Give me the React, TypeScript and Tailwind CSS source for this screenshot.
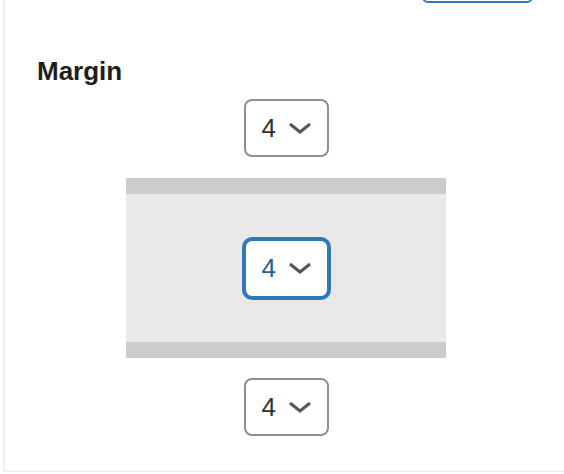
const Chevron = () => (
  <svg width="24" height="12" viewBox="0 0 24 12" className="shrink-0">
    <polyline
      points="2,2 12,10 22,2"
      fill="none"
      stroke="#50575e"
      strokeWidth="3"
      strokeLinejoin="miter"
    />
  </svg>
)

interface ISpacingSelect {
  value: string
  focused?: boolean
}

const SpacingSelect = ({ value, focused }: ISpacingSelect) => (
  <div
    className={
      focused
        ? 'w-[85px] h-[59px] rounded-[8px] border-2 border-[#3079b9] shadow-[0_0_0_2px_#3079b9] bg-white flex items-center pl-[16px] gap-[12px]'
        : 'w-[85px] h-[58px] rounded-[8px] border-2 border-[#8c8f94] bg-white flex items-center pl-[16px] gap-[12px]'
    }
  >
    <span
      className={
        focused
          ? 'text-[26px] leading-none text-[#1f6394]'
          : 'text-[26px] leading-none text-[#2c3338]'
      }
    >
      {value}
    </span>
    <Chevron />
  </div>
)

const App = () => {
  return (
    <div className="w-[564px] h-[474px] bg-white overflow-hidden font-['Liberation_Sans',Arial,sans-serif]">
      <div className="flow-root ml-[3px] h-[472px] border-l-2 border-b-2 border-[#f0f0f0] pl-[32px]">
        {/* bottom edge of the button above, cut off by the viewport */}
        <div className="ml-[385px] -mt-[40px] w-[111px] h-[43px] rounded-[6px] border-2 border-[#3079b9]" />

        <h2 className="mt-[52px] text-[26px] leading-[32px] font-bold text-[#1e1e1e]">
          Margin
        </h2>

        <div className="ml-[89px] w-[320px] flex flex-col items-center">
          <div className="mt-[12px]">
            <SpacingSelect value="4" />
          </div>

          <div className="mt-[21px] w-[320px] flex flex-col">
            <div className="h-[16px] bg-[#cccccc]" />
            <div className="h-[148px] bg-[#e9e9e9] flex items-center justify-center">
              <SpacingSelect value="4" focused />
            </div>
            <div className="h-[16px] bg-[#cccccc]" />
          </div>

          <div className="mt-[20px]">
            <SpacingSelect value="4" />
          </div>
        </div>
      </div>
    </div>
  )
}

export default App
